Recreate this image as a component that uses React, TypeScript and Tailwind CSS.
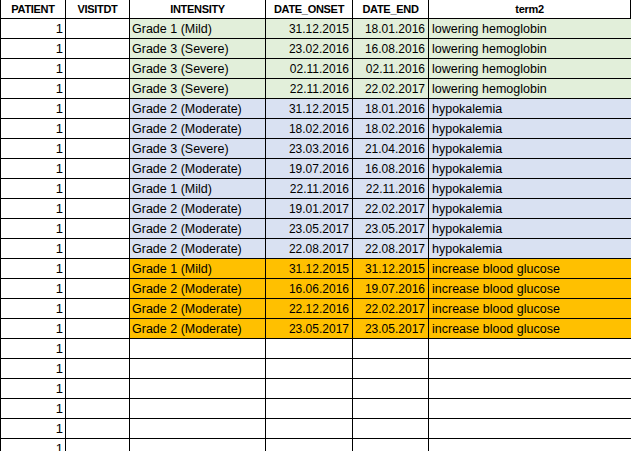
type Row = {
    intensity: string;
    onset: string;
    end: string;
    term: string;
    fill: string;
};

const green = 'bg-[#e2efda]';
const blue = 'bg-[#d9e1f2]';
const orange = 'bg-[#ffc000]';

const rows: Row[] = [
    { intensity: 'Grade 1 (Mild)', onset: '31.12.2015', end: '18.01.2016', term: 'lowering hemoglobin', fill: green },
    { intensity: 'Grade 3 (Severe)', onset: '23.02.2016', end: '16.08.2016', term: 'lowering hemoglobin', fill: green },
    { intensity: 'Grade 3 (Severe)', onset: '02.11.2016', end: '02.11.2016', term: 'lowering hemoglobin', fill: green },
    { intensity: 'Grade 3 (Severe)', onset: '22.11.2016', end: '22.02.2017', term: 'lowering hemoglobin', fill: green },
    { intensity: 'Grade 2 (Moderate)', onset: '31.12.2015', end: '18.01.2016', term: 'hypokalemia', fill: blue },
    { intensity: 'Grade 2 (Moderate)', onset: '18.02.2016', end: '18.02.2016', term: 'hypokalemia', fill: blue },
    { intensity: 'Grade 3 (Severe)', onset: '23.03.2016', end: '21.04.2016', term: 'hypokalemia', fill: blue },
    { intensity: 'Grade 2 (Moderate)', onset: '19.07.2016', end: '16.08.2016', term: 'hypokalemia', fill: blue },
    { intensity: 'Grade 1 (Mild)', onset: '22.11.2016', end: '22.11.2016', term: 'hypokalemia', fill: blue },
    { intensity: 'Grade 2 (Moderate)', onset: '19.01.2017', end: '22.02.2017', term: 'hypokalemia', fill: blue },
    { intensity: 'Grade 2 (Moderate)', onset: '23.05.2017', end: '23.05.2017', term: 'hypokalemia', fill: blue },
    { intensity: 'Grade 2 (Moderate)', onset: '22.08.2017', end: '22.08.2017', term: 'hypokalemia', fill: blue },
    { intensity: 'Grade 1 (Mild)', onset: '31.12.2015', end: '31.12.2015', term: 'increase blood glucose', fill: orange },
    { intensity: 'Grade 2 (Moderate)', onset: '16.06.2016', end: '19.07.2016', term: 'increase blood glucose', fill: orange },
    { intensity: 'Grade 2 (Moderate)', onset: '22.12.2016', end: '22.02.2017', term: 'increase blood glucose', fill: orange },
    { intensity: 'Grade 2 (Moderate)', onset: '23.05.2017', end: '23.05.2017', term: 'increase blood glucose', fill: orange },
    { intensity: '', onset: '', end: '', term: '', fill: 'bg-white' },
    { intensity: '', onset: '', end: '', term: '', fill: 'bg-white' },
    { intensity: '', onset: '', end: '', term: '', fill: 'bg-white' },
    { intensity: '', onset: '', end: '', term: '', fill: 'bg-white' },
    { intensity: '', onset: '', end: '', term: '', fill: 'bg-white' },
    { intensity: '', onset: '', end: '', term: '', fill: 'bg-white' },
];

const cell = 'flex h-full items-center border-r border-b border-black';

export default function App() {
    return (
        <div className="h-[451px] w-[631px] overflow-hidden bg-white font-['Liberation_Sans',Arial,sans-serif] text-[12.5px] text-black">
            <div className="w-[700px]">
                <div className="flex h-[19px] text-[11px] font-bold tracking-[-0.3px]">
                    <div className={`${cell} w-[66px] justify-center border-l`}>PATIENT</div>
                    <div className={`${cell} w-[64px] justify-center`}>VISITDT</div>
                    <div className={`${cell} w-[136px] justify-center`}>INTENSITY</div>
                    <div className={`${cell} w-[87px] justify-center`}>DATE_ONSET</div>
                    <div className={`${cell} w-[76px] justify-center`}>DATE_END</div>
                    <div className={`${cell} w-[202px] justify-center`}>term2</div>
                    <div className={`${cell} flex-1`} />
                </div>

                {rows.map((row, i) => (
                    <div key={i} className="flex h-[20px]">
                        <div className={`${cell} w-[66px] justify-end border-l pr-[2px] pt-[1px] text-[13px]`}>1</div>
                        <div className={`${cell} w-[64px]`} />
                        <div className={`${cell} w-[136px] pl-[2px] pt-[1px] ${row.fill}`}>{row.intensity}</div>
                        <div className={`${cell} w-[87px] justify-end pr-[3px] pt-[1px] text-[12px] ${row.fill}`}>{row.onset}</div>
                        <div className={`${cell} w-[76px] justify-end pr-[3px] pt-[1px] text-[12px] ${row.fill}`}>{row.end}</div>
                        <div className={`${cell} w-[202px] border-r-0 pl-[3px] pt-[1px] ${row.fill}`}>{row.term}</div>
                        <div className={`${cell} flex-1 ${row.fill}`} />
                    </div>
                ))}
            </div>
        </div>
    );
}
